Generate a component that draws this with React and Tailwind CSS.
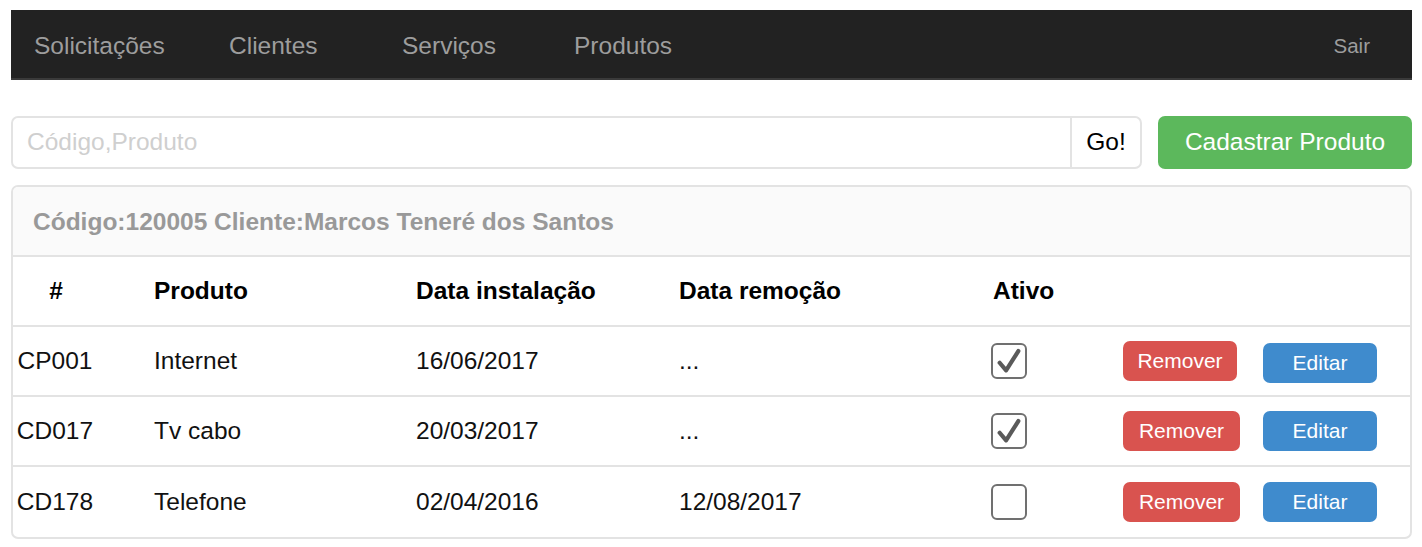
import { Fragment } from 'react'

const rows = [
  { code: 'CP001', produto: 'Internet', instalacao: '16/06/2017', remocao: '...', ativo: true, removerW: 'w-[114px]', shift: true },
  { code: 'CD017', produto: 'Tv cabo', instalacao: '20/03/2017', remocao: '...', ativo: true, removerW: 'w-[117px]' },
  { code: 'CD178', produto: 'Telefone', instalacao: '02/04/2016', remocao: '12/08/2017', ativo: false, removerW: 'w-[117px]' },
]

const cols = 'grid grid-cols-[141px_262px_263px_312px_132px_1fr] items-center'

function Checkbox({ checked }) {
  return (
    <span className="flex h-[36px] w-[36px] items-center justify-center rounded-[6px] border-2 border-[#707070] bg-white">
      {checked && (
        <svg viewBox="0 0 24 24" className="h-[28px] w-[28px]">
          <path d="M4 13.5 L9.5 20 L20 3.5" fill="none" stroke="#5a5a5a" strokeWidth="3.6" strokeLinecap="round" strokeLinejoin="round" />
        </svg>
      )}
    </span>
  )
}

export default function App() {
  return (
    <div className="bg-white pt-[10px] pl-[11px] pr-[10px] pb-[10px] font-['Liberation_Sans',Arial,sans-serif]">
      <nav className="flex h-[70px] items-center border-b-2 border-[#3a3a3a] bg-[#222222] pl-[23px] pr-[42px] pt-[5px] text-[#9d9d9d]">
        <span className="w-[195px] text-[24.5px]">Solicitações</span>
        <span className="w-[173px] text-[24.5px]">Clientes</span>
        <span className="w-[172px] text-[24.5px]">Serviços</span>
        <span className="text-[24.5px]">Produtos</span>
        <span className="ml-auto text-[20.5px]">Sair</span>
      </nav>

      <div className="mt-[36px] flex gap-[16px]">
        <div className="flex h-[53px] flex-1 rounded-[7px] border-2 border-[#e3e3e3]">
          <input
            className="flex-1 bg-transparent px-[14px] text-[24.5px] text-[#333] outline-none placeholder:text-[#cfcfcf]"
            placeholder="Código,Produto"
          />
          <button className="w-[70px] border-l-2 border-[#e3e3e3] text-[24.5px] text-black">Go!</button>
        </div>
        <button className="h-[53px] w-[254px] rounded-[7px] bg-[#5cb85c] text-[24.5px] text-white">Cadastrar Produto</button>
      </div>

      <div className="mt-[16px] overflow-hidden rounded-[7px] border-2 border-[#e3e3e3]">
        <div className="flex h-[70px] items-center border-b-2 border-[#e3e3e3] bg-[#fafafa] pl-[20px] pt-[2px] text-[24.5px] font-bold text-[#999999]">
          Código:120005 Cliente:Marcos Teneré dos Santos
        </div>
        <div className={`${cols} h-[70px] border-b-2 border-[#e3e3e3] text-[24.5px] font-bold text-black`}>
          <span className="pr-[55px] text-center">#</span>
          <span>Produto</span>
          <span>Data instalação</span>
          <span>Data remoção</span>
          <span className="pl-[2px]">Ativo</span>
          <span />
        </div>
        {rows.map((r, i) => (
          <div
            key={r.code}
            className={`${cols} h-[70px] text-[24.5px] text-[#111] ${i < rows.length - 1 ? 'border-b-2 border-[#e3e3e3]' : ''}`}
          >
            <span className="pr-[57px] text-center">{r.code}</span>
            <span>{r.produto}</span>
            <span>{r.instalacao}</span>
            <span>{r.remocao}</span>
            <span>
              <Checkbox checked={r.ativo} />
            </span>
            <div className="flex items-center">
              <div className="w-[140px]">
                <button className={`${r.removerW} h-[40px] rounded-[7px] bg-[#d9534f] text-[21px] text-white`}>Remover</button>
              </div>
              <button className={`w-[114px] h-[40px] rounded-[7px] bg-[#3f8bcd] text-[21px] text-white ${r.shift ? 'mt-[4px]' : ''}`}>
                Editar
              </button>
            </div>
          </div>
        ))}
      </div>
    </div>
  )
}
